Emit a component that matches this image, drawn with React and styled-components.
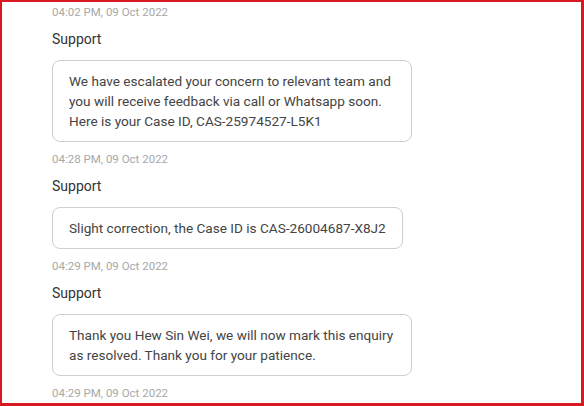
import React from 'react'
import styled, { createGlobalStyle } from 'styled-components'

const GlobalStyle = createGlobalStyle`
  html, body {
    margin: 0;
    padding: 0;
    background: #ffffff;
  }
  body {
    font-family: Roboto, "Liberation Sans", sans-serif;
  }
`

const messages = [
  {
    sender: 'Support',
    text: 'We have escalated your concern to relevant team and you will receive feedback via call or Whatsapp soon. Here is your Case ID, CAS-25974527-L5K1',
    time: '04:28 PM, 09 Oct 2022',
  },
  {
    sender: 'Support',
    text: 'Slight correction, the Case ID is CAS-26004687-X8J2',
    time: '04:29 PM, 09 Oct 2022',
  },
  {
    sender: 'Support',
    text: 'Thank you Hew Sin Wei, we will now mark this enquiry as resolved. Thank you for your patience.',
    time: '04:29 PM, 09 Oct 2022',
  },
]

function App() {
  return (
    <>
      <GlobalStyle />
      <Frame>
        <Thread>
          <Time first>04:02 PM, 09 Oct 2022</Time>
          {messages.map((m, i) => (
            <Message key={i}>
              <Sender>{m.sender}</Sender>
              <Bubble>{m.text}</Bubble>
              <Time>{m.time}</Time>
            </Message>
          ))}
        </Thread>
      </Frame>
    </>
  )
}

export default App

const Frame = styled.div`
  width: 584px;
  height: 406px;
  box-sizing: border-box;
  border-style: solid;
  border-color: #d81920;
  border-width: 2px 3px 3px 2px;
  overflow: hidden;
  background: #ffffff;
`
const Thread = styled.div`
  display: flex;
  flex-direction: column;
  padding: 2px 0 0 50px;
`
const Message = styled.div`
  display: flex;
  flex-direction: column;
  align-items: flex-start;
`
const Time = styled.div`
  font-size: 11.5px;
  line-height: 16px;
  color: #a8a8a8;
  margin-top: ${p => (p.first ? '0' : '9px')};
`
const Sender = styled.div`
  font-size: 14px;
  line-height: 20px;
  color: #333333;
  margin-top: 9px;
`
const Bubble = styled.div`
  margin-top: 11px;
  max-width: 360px;
  box-sizing: border-box;
  padding: 10px 16px;
  border: 1.5px solid #cfcfcf;
  border-radius: 8px;
  font-size: 13.6px;
  line-height: 20px;
  color: #444444;
`
